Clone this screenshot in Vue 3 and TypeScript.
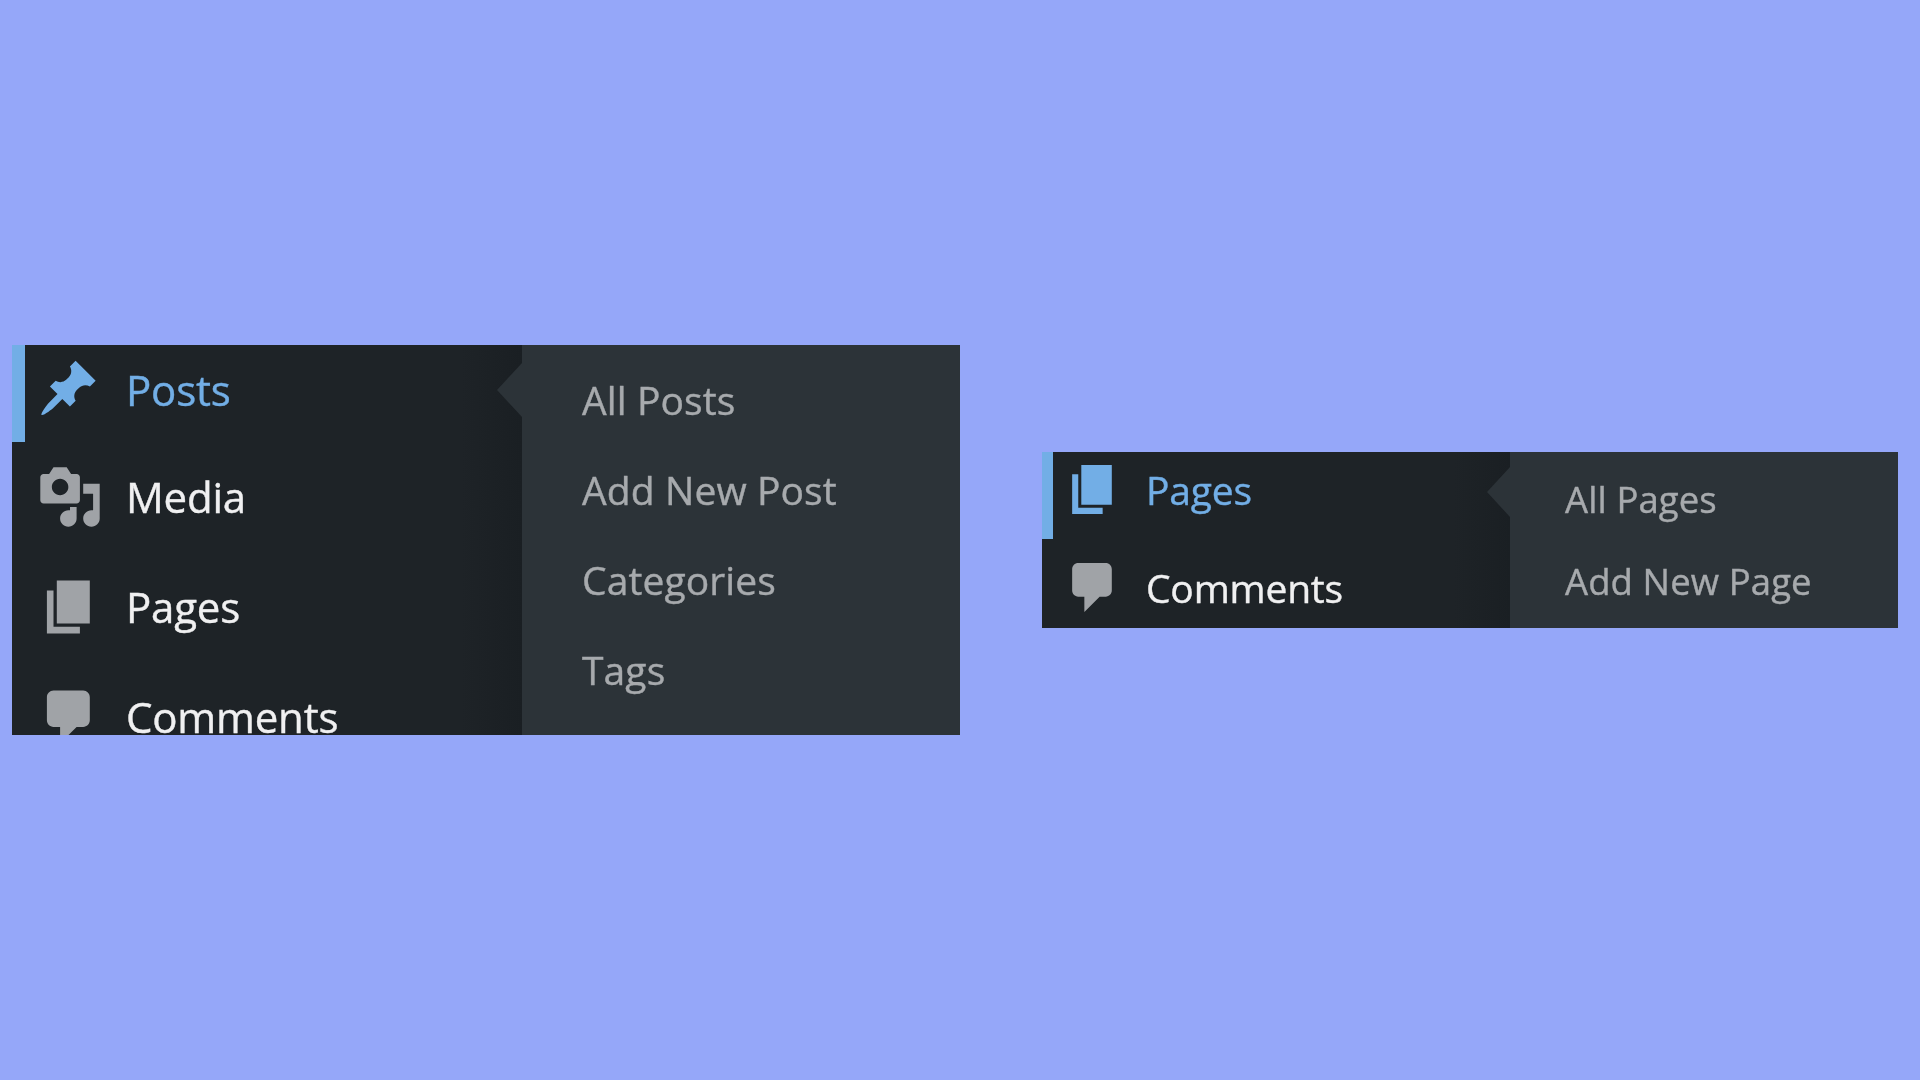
<template>
    <div class="page">
        <section v-for="panel in panels" :key="panel.id" class="panel" :class="panel.id">
            <nav class="menu">
                <a v-for="item in panel.items" :key="item.label" class="menu-item" :class="{ current: item.current }">
                    <svg class="icon" :class="`icon-${item.icon}`" viewBox="0 0 20 20" aria-hidden="true">
                        <path :d="icons[item.icon]" fill="currentColor" />
                    </svg>
                    <span class="label">{{ item.label }}</span>
                </a>
            </nav>
            <ul class="submenu">
                <li v-for="link in panel.links" :key="link">{{ link }}</li>
            </ul>
        </section>
    </div>
</template>

<script setup lang="ts">
type IconName = "post" | "media" | "page" | "comments"

interface MenuItem {
    label: string
    icon: IconName
    current?: boolean
}

interface Panel {
    id: string
    items: MenuItem[]
    links: string[]
}

const icons: Record<IconName, string> = {
    post: "M10.44 3.02l1.82-1.82 6.36 6.35-1.83 1.82c-1.05-.68-2.48-.57-3.41.36l-.75.75c-.92.93-1.04 2.35-.35 3.41l-1.83 1.82-2.41-2.41-2.8 2.79c-.42.42-3.38 2.71-3.8 2.29s1.86-3.39 2.28-3.81l2.79-2.79L4.1 9.36l1.83-1.82c1.05.69 2.48.57 3.41-.36l.75-.75c.93-.92 1.04-2.35.36-3.41z",
    media: "M13 11V4c0-.55-.45-1-1-1h-1.67L9 1H5L3.67 3H2c-.55 0-1 .45-1 1v7c0 .55.45 1 1 1h10c.55 0 1-.45 1-1zM7 4.5c1.38 0 2.5 1.12 2.5 2.5S8.38 9.5 7 9.5 4.5 8.38 4.5 7 5.62 4.5 7 4.5zM14 6h5v10.5c0 1.38-1.12 2.5-2.5 2.5S14 17.88 14 16.5s1.12-2.5 2.5-2.5c.17 0 .34.02.5.05V9h-3V6zm-4 8.05V13h2v3.5c0 1.38-1.12 2.5-2.5 2.5S7 17.88 7 16.5 8.12 14 9.5 14c.17 0 .34.02.5.05z",
    page: "M6 15V2h10v13H6zm-1 1h8v2H3V5h2v11z",
    comments: "M5 2h9c1.1 0 2 .9 2 2v7c0 1.1-.9 2-2 2h-2l-5 5v-5H5c-1.1 0-2-.9-2-2V4c0-1.1.9-2 2-2z",
}

const panels: Panel[] = [
    {
        id: "posts-panel",
        items: [
            { label: "Posts", icon: "post", current: true },
            { label: "Media", icon: "media" },
            { label: "Pages", icon: "page" },
            { label: "Comments", icon: "comments" },
        ],
        links: ["All Posts", "Add New Post", "Categories", "Tags"],
    },
    {
        id: "pages-panel",
        items: [
            { label: "Pages", icon: "page", current: true },
            { label: "Comments", icon: "comments" },
        ],
        links: ["All Pages", "Add New Page"],
    },
]
</script>

<style>
body {
    background: #95a7f9;
}
</style>

<style scoped>
.page {
    display: flex;
    align-items: flex-start;
    width: 1920px;
    height: 1080px;
    padding-left: 12px;
    box-sizing: border-box;
    background: #95a7f9;
    overflow: hidden;
    font-family: "Open Sans", "Noto Sans", sans-serif;
}
.panel {
    position: relative;
    display: flex;
    overflow: hidden;
    background: #2c3338;
    filter: blur(0.6px);
}
.posts-panel {
    width: 948px;
    height: 390px;
    margin-top: 345px;
}
.pages-panel {
    width: 856px;
    height: 176px;
    margin-top: 452px;
    margin-left: 82px;
}
.menu {
    display: flex;
    flex-direction: column;
    flex: none;
    background: linear-gradient(to right, #1e2327 88%, #1a1f23);
}
.posts-panel .menu {
    width: 510px;
}
.pages-panel .menu {
    width: 468px;
}
.menu-item {
    display: flex;
    align-items: center;
    flex: none;
    box-sizing: border-box;
    color: #f0f0f1;
}
.posts-panel .menu-item {
    height: 110px;
    padding-left: 25px;
}
.posts-panel .menu-item.current {
    height: 97px;
    padding-bottom: 8px;
}
.pages-panel .menu-item {
    height: 89px;
    padding-left: 21px;
    padding-top: 8px;
}
.menu-item.current {
    color: #72aee6;
    border-left: 13px solid #72aee6;
    padding-left: 12px !important;
}
.pages-panel .menu-item.current {
    height: 87px;
    border-left-width: 11px;
    padding-left: 10px !important;
    padding-top: 0;
    padding-bottom: 12px;
}
.icon {
    flex: none;
    width: 66px;
    height: 66px;
    color: #a0a3a7;
}
.icon-post {
    width: 63px;
    height: 63px;
    margin: 0 3px 3px 0;
}
.pages-panel .icon {
    width: 61px;
    height: 61px;
}
.current .icon {
    color: #72aee6;
}
.label {
    margin-left: 23px;
    font-size: 42px;
    font-weight: 500;
    line-height: 1;
    letter-spacing: -0.2px;
    -webkit-text-stroke: 0.4px currentColor;
}
.pages-panel .label {
    margin-left: 22px;
    font-size: 39px;
}
.submenu {
    list-style: none;
    margin: 0;
    padding: 0 0 0 60px;
    color: #a7aaad;
    font-size: 39px;
    line-height: 90px;
    letter-spacing: 0.1px;
    -webkit-text-stroke: 0.4px currentColor;
}
.posts-panel .submenu {
    padding-top: 10px;
}
.pages-panel .submenu {
    padding-left: 55px;
    padding-top: 6px;
    font-size: 36.5px;
    line-height: 82px;
}
/* little arrow pointing at the current item */
.submenu::before {
    content: "";
    position: absolute;
    width: 25px;
    height: 54px;
    background: #2c3338;
    clip-path: polygon(100% 0, 0 50%, 100% 100%);
}
.posts-panel .submenu::before {
    left: 485px;
    top: 18px;
}
.pages-panel .submenu::before {
    left: 445px;
    top: 15px;
    width: 23px;
    height: 50px;
}
</style>
